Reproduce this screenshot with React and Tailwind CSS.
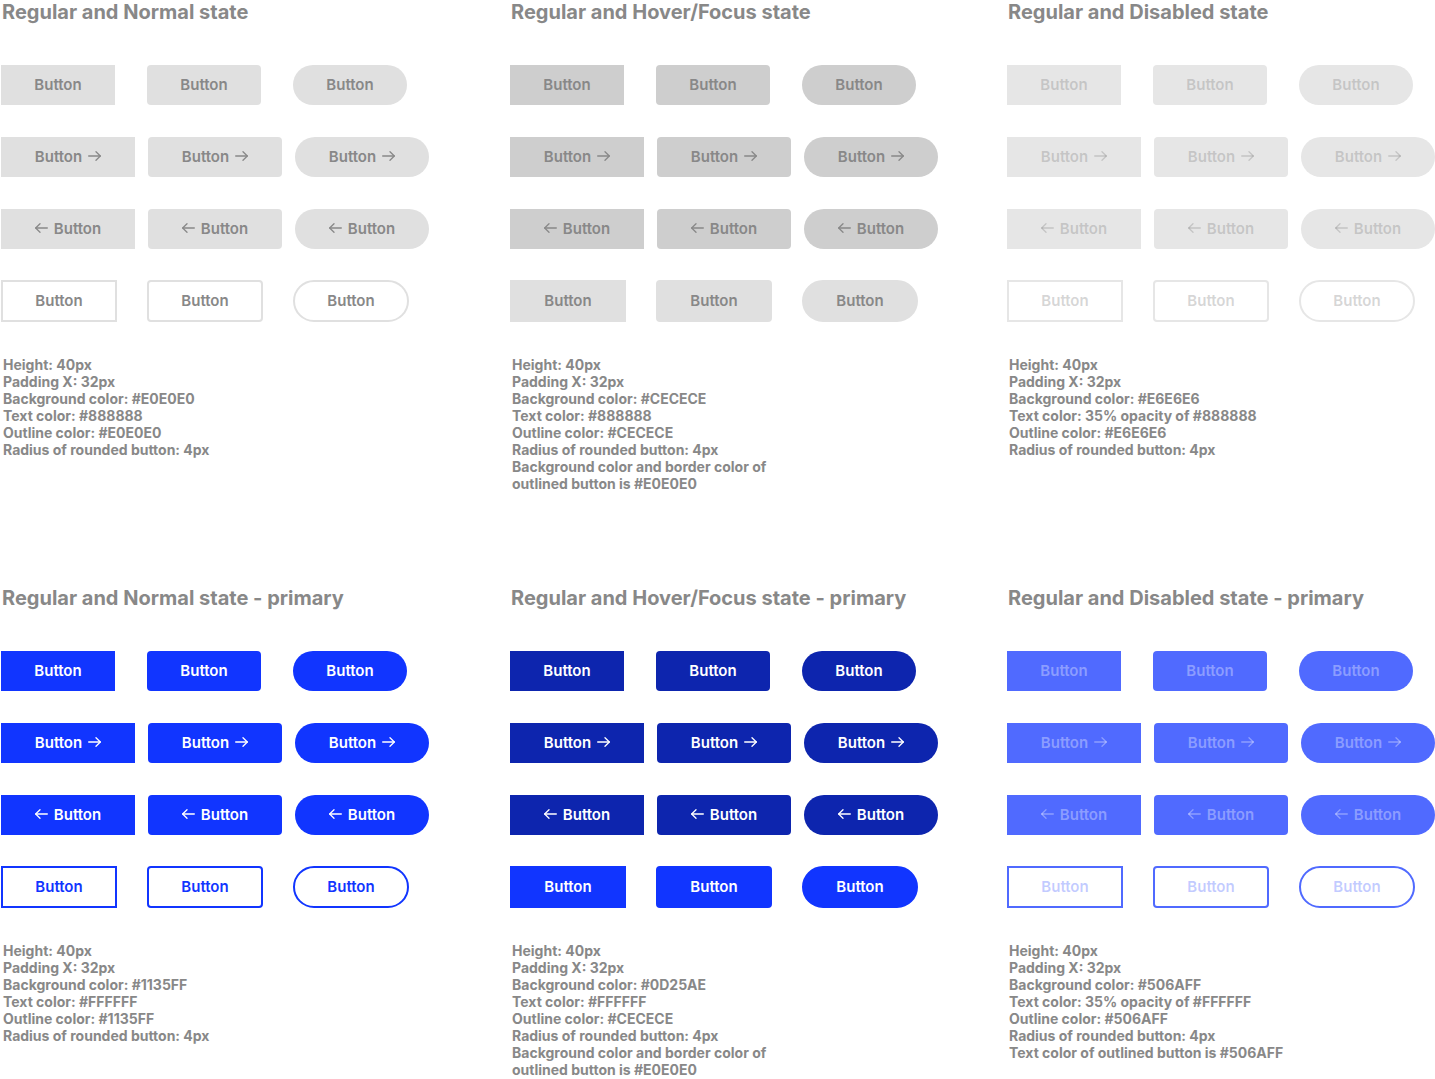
import React from "react";

const themes = {
  grayNormal: {
    fill: "bg-[#E0E0E0] text-[#888888]",
    outline: "bg-white border-2 border-[#E0E0E0] text-[#888888]",
  },
  grayHover: {
    fill: "bg-[#CECECE] text-[#888888]",
    outline: "bg-[#E0E0E0] border-2 border-[#E0E0E0] text-[#888888]",
  },
  grayDisabled: {
    fill: "bg-[#E6E6E6] text-[#888888]/35",
    outline: "bg-white border-2 border-[#E6E6E6] text-[#888888]/35",
  },
  primaryNormal: {
    fill: "bg-[#1135FF] text-white",
    outline: "bg-white border-2 border-[#1135FF] text-[#1135FF]",
  },
  primaryHover: {
    fill: "bg-[#0D25AE] text-white",
    outline: "bg-[#1135FF] border-2 border-[#1135FF] text-white",
  },
  primaryDisabled: {
    fill: "bg-[#506AFF] text-white/35",
    outline: "bg-white border-2 border-[#506AFF] text-[#506AFF]/35",
  },
};

const shapes = {
  square: "rounded-none",
  rounded: "rounded-[4px]",
  pill: "rounded-full",
};

function ArrowRight() {
  return (
    <svg width="13" height="10" viewBox="0 0 13 10" fill="none" stroke="currentColor" strokeWidth="1.3" strokeLinecap="round" strokeLinejoin="round">
      <path d="M0.7 5h11.6" />
      <path d="M8 0.7l4.3 4.3L8 9.3" />
    </svg>
  );
}

function ArrowLeft() {
  return (
    <svg width="13" height="10" viewBox="0 0 13 10" fill="none" stroke="currentColor" strokeWidth="1.3" strokeLinecap="round" strokeLinejoin="round">
      <path d="M12.3 5H0.7" />
      <path d="M5 0.7L0.7 5 5 9.3" />
    </svg>
  );
}

function Btn({ theme, shape, kind }) {
  const t = themes[theme];
  const base =
    "flex items-center justify-center gap-[6px] pb-[2px] text-[15px] font-semibold leading-none shrink-0 " +
    shapes[shape];
  if (kind === "outline") {
    return <div className={base + " w-[116px] h-[42px] " + t.outline}>Button</div>;
  }
  if (kind === "right") {
    return (
      <div className={base + " w-[134px] h-[40px] " + t.fill}>
        <span>Button</span>
        <ArrowRight />
      </div>
    );
  }
  if (kind === "left") {
    return (
      <div className={base + " w-[134px] h-[40px] " + t.fill}>
        <ArrowLeft />
        <span>Button</span>
      </div>
    );
  }
  return <div className={base + " w-[114px] h-[40px] " + t.fill}>Button</div>;
}

function Column({ title, theme, lines, width }) {
  return (
    <div className={"flex flex-col shrink-0 " + width}>
      <div className="h-[24px] pl-[1px] text-[20px] leading-[24px] font-bold text-[#888888] whitespace-nowrap">
        {title}
      </div>
      <div className="mt-[41px] flex gap-[32px]">
        <Btn theme={theme} shape="square" kind="plain" />
        <Btn theme={theme} shape="rounded" kind="plain" />
        <Btn theme={theme} shape="pill" kind="plain" />
      </div>
      <div className="mt-[32px] flex gap-[13px]">
        <Btn theme={theme} shape="square" kind="right" />
        <Btn theme={theme} shape="rounded" kind="right" />
        <Btn theme={theme} shape="pill" kind="right" />
      </div>
      <div className="mt-[32px] flex gap-[13px]">
        <Btn theme={theme} shape="square" kind="left" />
        <Btn theme={theme} shape="rounded" kind="left" />
        <Btn theme={theme} shape="pill" kind="left" />
      </div>
      <div className="mt-[31px] flex gap-[30px]">
        <Btn theme={theme} shape="square" kind="outline" />
        <Btn theme={theme} shape="rounded" kind="outline" />
        <Btn theme={theme} shape="pill" kind="outline" />
      </div>
      <div className="mt-[34px] pl-[2px] text-[14px] leading-[17px] font-bold text-[#888888]">
        {lines.map((l, i) => (
          <div key={i} className="whitespace-nowrap">{l}</div>
        ))}
      </div>
    </div>
  );
}

export default function App() {
  return (
    <div
      className="w-[1435px] h-[1079px] bg-white overflow-hidden pl-[1px]"
      style={{ fontFamily: "Inter, 'Noto Sans', sans-serif" }}
    >
      <div className="flex h-[586px]">
        <Column
          width="w-[509px]"
          title="Regular and Normal state"
          theme="grayNormal"
          lines={[
            "Height: 40px",
            "Padding X: 32px",
            "Background color: #E0E0E0",
            "Text color: #888888",
            "Outline color: #E0E0E0",
            "Radius of rounded button: 4px",
          ]}
        />
        <Column
          width="w-[497px]"
          title="Regular and Hover/Focus state"
          theme="grayHover"
          lines={[
            "Height: 40px",
            "Padding X: 32px",
            "Background color: #CECECE",
            "Text color: #888888",
            "Outline color: #CECECE",
            "Radius of rounded button: 4px",
            "Background color and border color of",
            "outlined button is #E0E0E0",
          ]}
        />
        <Column
          width="w-[428px]"
          title="Regular and Disabled state"
          theme="grayDisabled"
          lines={[
            "Height: 40px",
            "Padding X: 32px",
            "Background color: #E6E6E6",
            "Text color: 35% opacity of #888888",
            "Outline color: #E6E6E6",
            "Radius of rounded button: 4px",
          ]}
        />
      </div>
      <div className="flex">
        <Column
          width="w-[509px]"
          title="Regular and Normal state - primary"
          theme="primaryNormal"
          lines={[
            "Height: 40px",
            "Padding X: 32px",
            "Background color: #1135FF",
            "Text color: #FFFFFF",
            "Outline color: #1135FF",
            "Radius of rounded button: 4px",
          ]}
        />
        <Column
          width="w-[497px]"
          title="Regular and Hover/Focus state - primary"
          theme="primaryHover"
          lines={[
            "Height: 40px",
            "Padding X: 32px",
            "Background color: #0D25AE",
            "Text color: #FFFFFF",
            "Outline color: #CECECE",
            "Radius of rounded button: 4px",
            "Background color and border color of",
            "outlined button is #E0E0E0",
          ]}
        />
        <Column
          width="w-[428px]"
          title="Regular and Disabled state - primary"
          theme="primaryDisabled"
          lines={[
            "Height: 40px",
            "Padding X: 32px",
            "Background color: #506AFF",
            "Text color: 35% opacity of #FFFFFF",
            "Outline color: #506AFF",
            "Radius of rounded button: 4px",
            "Text color of outlined button is #506AFF",
          ]}
        />
      </div>
    </div>
  );
}
